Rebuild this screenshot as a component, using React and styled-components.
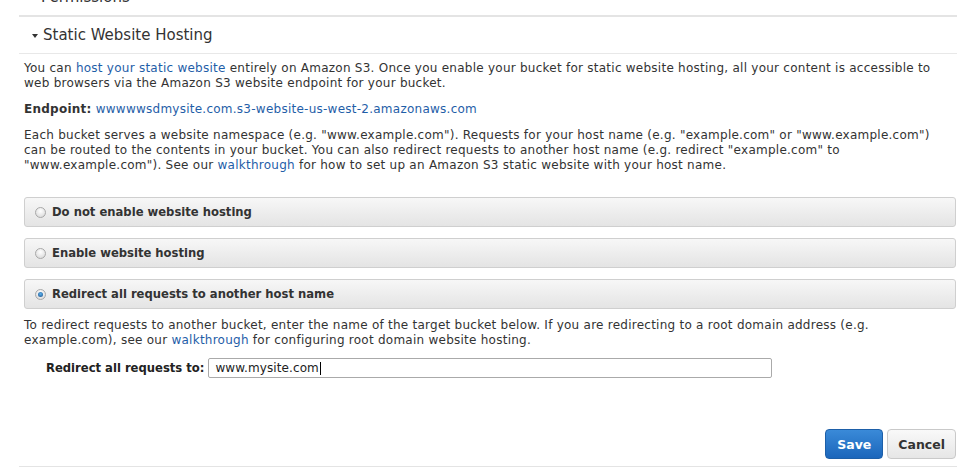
import React from "react";
import styled, { createGlobalStyle } from "styled-components";

const Global = createGlobalStyle`
  html, body { margin: 0; padding: 0; background: #fff; overflow: hidden; }
  body { font-family: "DejaVu Sans", Verdana, sans-serif; color: #333; }
`;

const Page = styled.div`
  width: 957px;
  padding-left: 19px;
  box-sizing: border-box;
  margin-top: -21px;
`;

const Section = styled.section`
  border-bottom: 2px solid #e4e4e4;
`;

const Header = styled.div`
  height: 36px;
  display: flex;
  align-items: center;
  gap: 5px;
  padding-left: 13px;
  font-size: 15px;
  color: #333;
  border-bottom: ${(p) => (p.$open ? "1px solid #e8e8e8" : "none")};
`;

const CaretDown = styled.span`
  width: 0;
  height: 0;
  border-left: 3.5px solid transparent;
  border-right: 3.5px solid transparent;
  border-top: 4px solid #333;
  margin-top: 1px;
`;

const CaretRight = styled.span`
  width: 0;
  height: 0;
  border-top: 3.5px solid transparent;
  border-bottom: 3.5px solid transparent;
  border-left: 4px solid #333;
`;

const Body = styled.div`
  padding: 7px 1px 7px 5px;
  font-size: 12px;
  letter-spacing: 0.25px;
  line-height: 15px;
`;

const P = styled.p`
  margin: 0 0 ${(p) => p.$mb ?? 11}px;
`;

const Link = styled.a`
  color: #1f5ea8;
  text-decoration: none;
`;

const Radios = styled.div`
  display: flex;
  flex-direction: column;
  gap: 11px;
  margin: 24px 0 9px;
`;

const RadioRow = styled.label`
  height: 28px;
  display: flex;
  align-items: center;
  gap: 6px;
  padding-left: 10px;
  border: 1px solid #cfcfcf;
  border-radius: 3px;
  background: linear-gradient(#f7f7f7, #e4e4e4);
  font-weight: bold;
  font-size: 11.6px;
  letter-spacing: 0;
  color: #333;
`;

const Radio = styled.span`
  width: 11px;
  height: 11px;
  border-radius: 50%;
  border: 1px solid #a8a8a8;
  box-sizing: border-box;
  background: radial-gradient(circle at 50% 35%, #ffffff, #d4d4d4);
  display: flex;
  align-items: center;
  justify-content: center;
  &::after {
    content: "";
    width: 5px;
    height: 5px;
    border-radius: 50%;
    background: ${(p) =>
      p.$checked ? "radial-gradient(circle at 50% 40%, #5fb4f0, #154a82)" : "transparent"};
  }
`;

const FieldRow = styled.div`
  display: flex;
  align-items: center;
  gap: 4px;
  padding-left: 22px;
  margin-top: 10px;
`;

const FieldLabel = styled.span`
  font-weight: bold;
  font-size: 11.6px;
  letter-spacing: 0;
  color: #222;
`;

const Input = styled.div`
  width: 564px;
  height: 20px;
  box-sizing: border-box;
  border: 1px solid #aaa;
  border-radius: 2px;
  padding-left: 6px;
  display: flex;
  align-items: center;
  color: #222;
  letter-spacing: 0.1px;
`;

const Cursor = styled.span`
  width: 1px;
  height: 13px;
  background: #000;
  margin-left: 1px;
`;

const Actions = styled.div`
  display: flex;
  justify-content: flex-end;
  gap: 4px;
  margin-top: 51px;
`;

const Button = styled.button`
  height: 30px;
  padding: 0 ${(p) => (p.$primary ? 11 : 10)}px;
  border-radius: 4px;
  font-family: "DejaVu Sans", Verdana, sans-serif;
  font-size: 12.5px;
  font-weight: bold;
  cursor: pointer;
  border: 1px solid ${(p) => (p.$primary ? "#1d5fa8" : "#c9c9c9")};
  color: ${(p) => (p.$primary ? "#fff" : "#333")};
  background: ${(p) =>
    p.$primary
      ? "linear-gradient(#3a8ad8, #1b66bb)"
      : "linear-gradient(#f9f9f9, #e6e6e6)"};
`;

export default function App() {
  return (
    <>
      <Global />
      <Page>
        <Section>
          <Header>
            <CaretRight />
            Permissions
          </Header>
        </Section>
        <Section>
          <Header $open>
            <CaretDown />
            Static Website Hosting
          </Header>
          <Body>
            <P>
              You can <Link>host your static website</Link> entirely on Amazon S3. Once you enable your bucket for static website hosting, all your content is accessible to web browsers via the Amazon S3 website endpoint for your bucket.
            </P>
            <P>
              <b>Endpoint:</b> <Link>wwwwwsdmysite.com.s3-website-us-west-2.amazonaws.com</Link>
            </P>
            <P $mb={0}>
              Each bucket serves a website namespace (e.g. "www.example.com"). Requests for your host name (e.g. "example.com" or "www.example.com") can be routed to the contents in your bucket. You can also redirect requests to another host name (e.g. redirect "example.com" to "www.example.com"). See our <Link>walkthrough</Link> for how to set up an Amazon S3 static website with your host name.
            </P>
            <Radios>
              <RadioRow>
                <Radio />
                Do not enable website hosting
              </RadioRow>
              <RadioRow>
                <Radio />
                Enable website hosting
              </RadioRow>
              <RadioRow>
                <Radio $checked />
                Redirect all requests to another host name
              </RadioRow>
            </Radios>
            <P $mb={0}>
              To redirect requests to another bucket, enter the name of the target bucket below. If you are redirecting to a root domain address (e.g. example.com), see our <Link>walkthrough</Link> for configuring root domain website hosting.
            </P>
            <FieldRow>
              <FieldLabel>Redirect all requests to:</FieldLabel>
              <Input>
                www.mysite.com
                <Cursor />
              </Input>
            </FieldRow>
            <Actions>
              <Button $primary>Save</Button>
              <Button>Cancel</Button>
            </Actions>
          </Body>
        </Section>
      </Page>
    </>
  );
}
